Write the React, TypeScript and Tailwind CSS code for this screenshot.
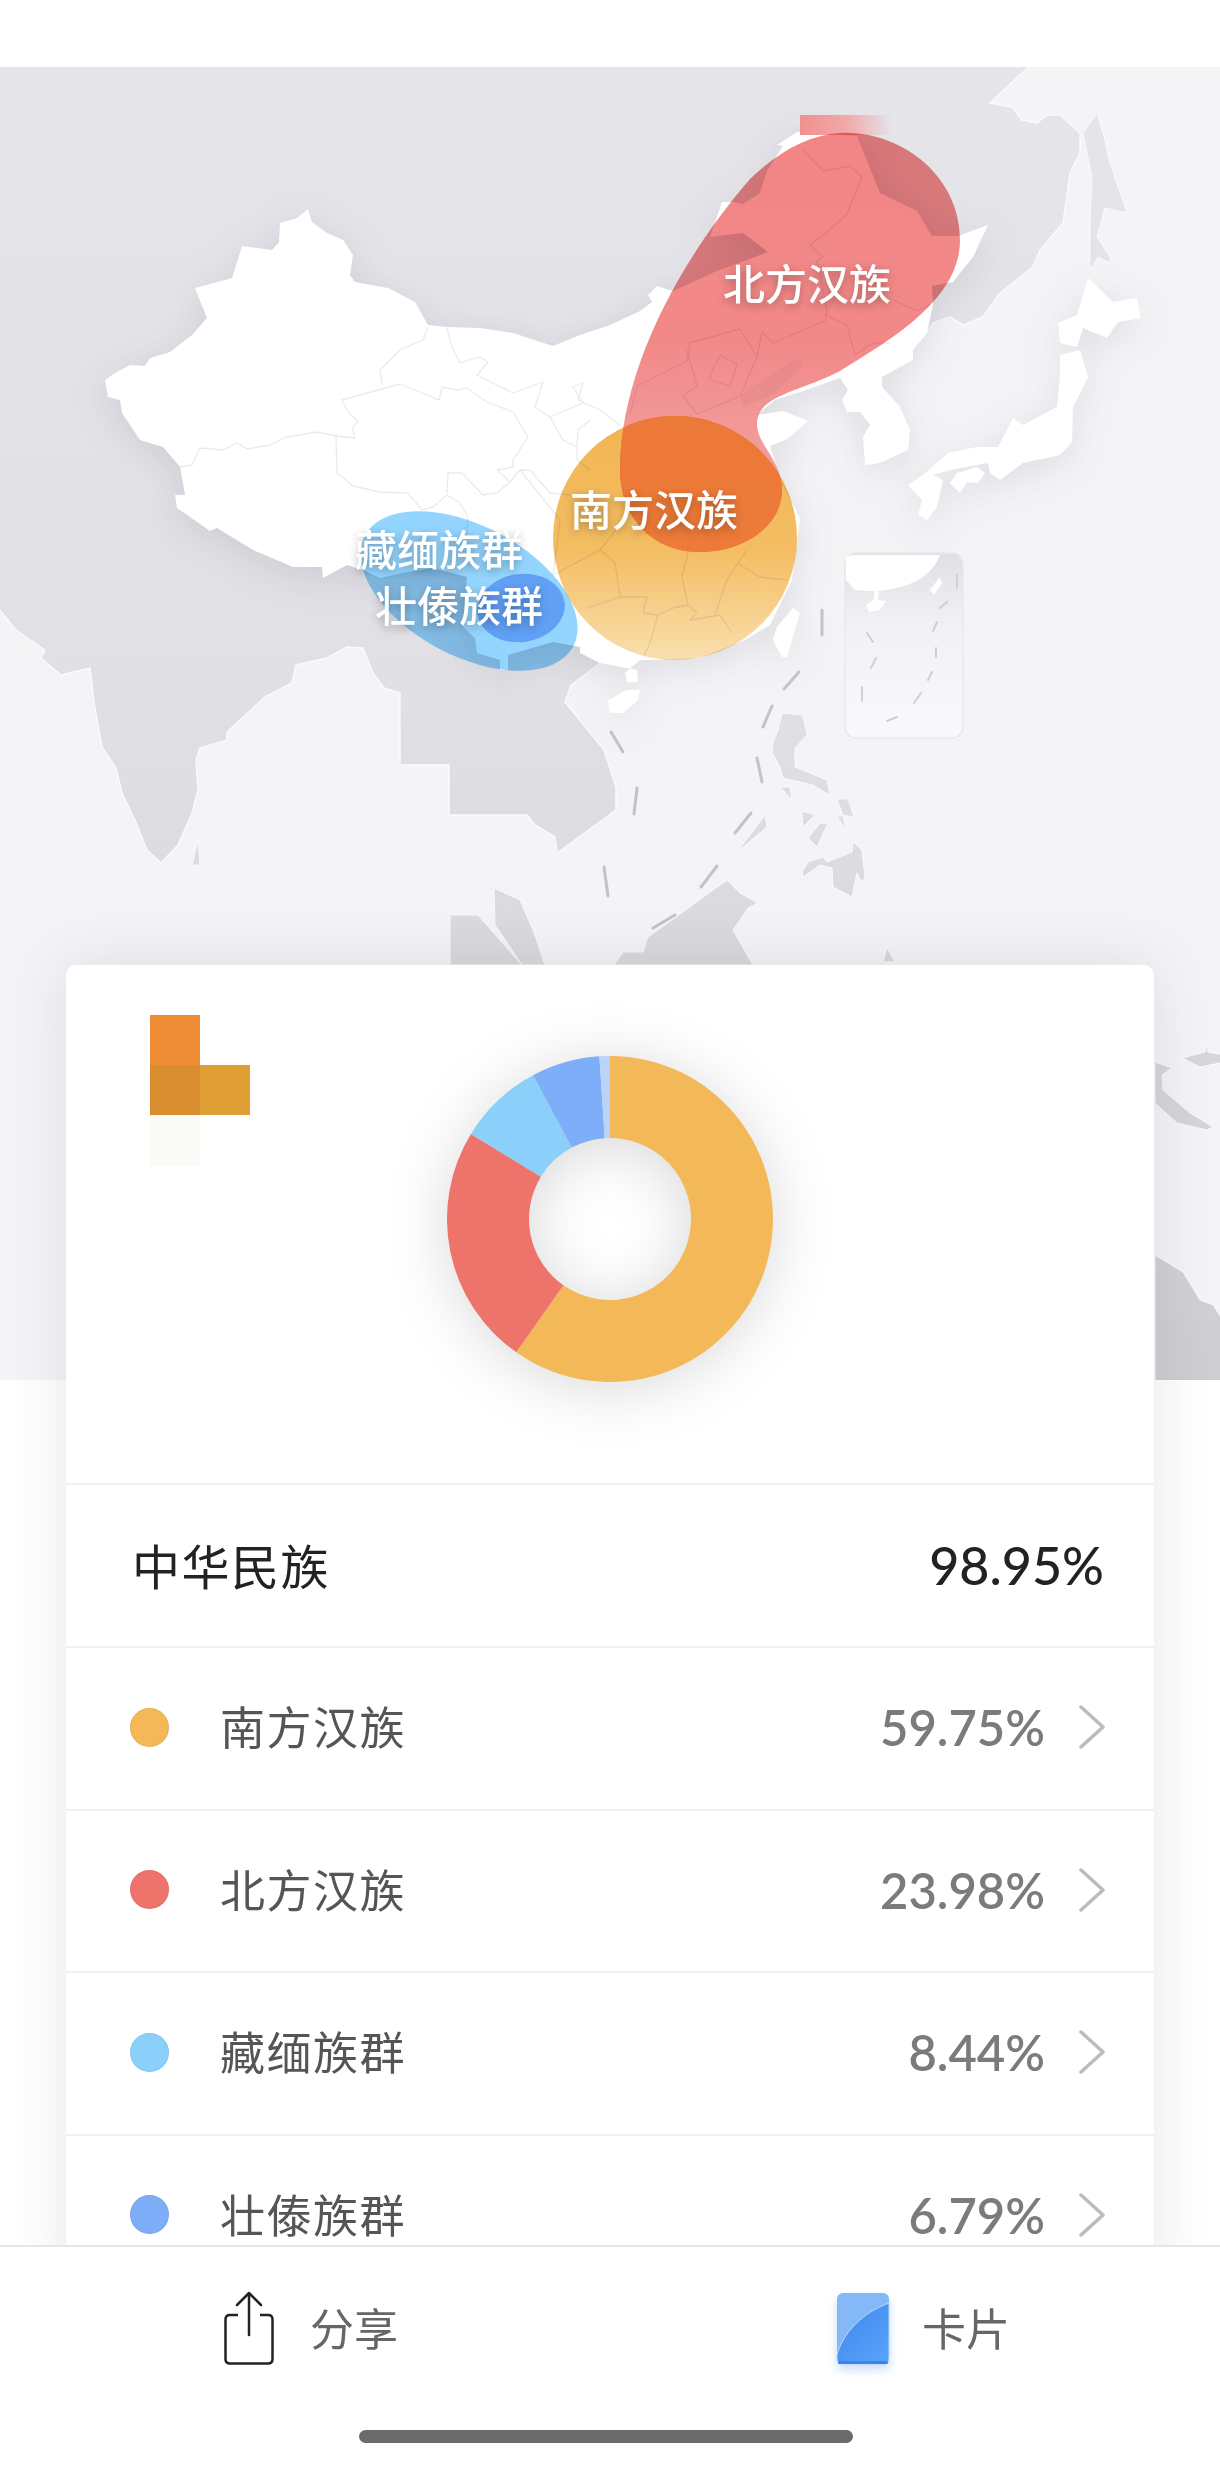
const cjk = "font-['Noto_Sans_CJK_SC',sans-serif]";
const latin = "font-['Lato','Noto_Sans_CJK_SC',sans-serif]";

const landPts =
  "-5,60 1036,60 990,103 1012,107 1022,120 1037,123 1047,115 1060,115 1080,133 1080,153 1070,173 1063,223 1040,250 1033,267 1000,293 983,317 963,325 950,317 933,323 927,333 840,360 740,400 700,600 600,663 571,685 565,702 604,750 616,787 616,810 557,853 555,837 535,825 527,815 449,815 449,765 400,765 400,693 384,688 373,673 363,648 347,647 327,658 296,665 292,683 265,697 227,732 227,740 200,748 196,760 198,790 192,813 178,845 161,863 147,850 135,820 122,793 116,768 102,747 94,703 90,668 61,675 41,658 45,650 16,630 -5,604";

const chinaPts =
  "105,380 115,373 130,365 145,366 150,358 170,352 192,335 207,318 195,288 232,278 242,246 272,250 279,242 280,223 297,218 308,209 312,222 327,233 343,240 353,255 350,275 355,282 388,288 415,302 428,325 447,327 480,328 513,333 553,346 580,335 610,325 640,311 652,302 648,295 657,286 673,291 717,271 768,252 743,233 710,237 722,202 733,202 743,204 760,193 767,171 783,146 777,145 797,132 857,136 880,193 917,211 932,236 958,236 988,225 973,257 953,282 932,286 933,304 927,333 913,350 913,360 882,377 882,387 900,407 910,430 908,450 880,463 865,465 863,437 870,425 860,412 847,412 842,400 848,390 840,378 800,392 775,400 757,415 783,411 808,421 787,439 770,446 783,486 800,518 797,543 792,580 770,625 745,640 700,658 650,660 640,660 625,673 627,682 638,682 637,670 600,663 580,653 580,647 553,642 508,655 508,670 500,670 500,660 477,653 475,638 463,627 467,577 433,568 407,572 380,578 363,570 347,565 323,578 322,567 293,567 253,550 217,528 210,531 177,508 175,495 185,495 180,467 163,447 140,440 122,413 120,400 108,397";

const whiteIslands = [
  "1088,278 1113,302 1137,298 1141,318 1118,322 1107,338 1083,328 1077,347 1060,343 1058,323 1077,315",
  "1060,355 1080,350 1088,377 1073,407 1072,442 1060,455 1023,463 1000,480 990,473 988,463 950,470 933,475 943,480 937,507 927,520 918,515 922,500 908,485 923,475 948,453 977,447 998,447 1013,418 1023,425 1057,407 1060,377",
  "950,483 957,473 977,467 985,473 978,483 967,482 960,493",
  "793,608 800,613 787,657 782,657 773,640 777,627",
  "608,700 627,690 640,690 638,700 623,713 610,713",
];

const grayIslands = [
  "1097,113 1105,140 1109,160 1127,213 1105,208 1097,237 1110,257 1110,263 1098,257 1090,270 1090,223 1092,177 1083,133",
  "782,713 803,715 807,735 795,748 795,767 810,773 827,780 830,795 813,785 800,782 783,778 780,767 772,753 773,742 778,730",
  "853,842 862,850 865,877 862,883 857,873 852,897 833,887 832,868 820,865 803,877 802,872 808,862 823,857 827,862 852,852",
  "780,787 790,787 792,800",
  "802,811 815,815 803,827",
  "808,838 820,823 828,823 817,847",
  "837,799 848,799 854,817 843,815",
  "837,816 843,816 846,830",
  "765,815 767,827 737,852",
  "615,963 623,952 643,952 648,937 727,880 740,893 758,903 748,908 733,930 753,965 615,965",
  "450,915 478,915 522,965 450,965",
  "494,888 520,900 533,930 545,965 522,965 495,925",
  "883,962 887,947 895,962",
  "198,840 200,865 192,865",
  "1155,1062 1172,1068 1162,1075 1163,1090 1190,1113 1213,1127 1207,1130 1177,1123 1155,1103",
  "1182,1058 1205,1052 1206,1044 1208,1052 1225,1055 1225,1062 1200,1067",
  "1155,1255 1183,1272 1200,1300 1213,1305 1225,1323 1225,1385 1155,1385",
];

const provinceLines = [
  "180,467 192,465 200,448 223,450 237,443 247,449 270,445 287,437 317,432 337,436 355,438 352,428 358,422 347,410 342,400 400,384 439,400 442,387 457,390 467,388 487,402 513,412 528,437 513,460 513,467 497,470 510,482 520,470 530,470 550,493 570,495",
  "382,385 380,370 400,350 423,340 428,327",
  "447,328 452,347 460,363 480,357 488,362 477,375 513,393 543,382 535,407 550,417 583,403 573,387 583,383 578,400 600,410 620,425",
  "336,436 337,473 353,486 380,492 408,493 422,510 433,507 447,495 460,503 468,517 466,540",
  "447,493 448,473 462,473 483,495 497,493 510,482",
  "550,417 563,440 577,447 578,430 590,420",
  "577,447 577,460 590,470",
  "803,150 823,171 850,166 862,177 847,214 833,227 810,245 823,257 817,261 827,311 825,321 773,343 762,332 757,357 740,329 690,343 687,361 637,386 630,414",
  "823,314 847,325 855,355 873,343 890,343",
  "893,300 917,311 930,305",
  "687,350 697,386 683,396 697,414 740,396 757,357",
  "710,375 720,355 737,364 730,386 710,380 710,375",
  "600,550 615,563 620,597 587,608",
  "620,597 647,597 643,613 658,615 650,643 643,658",
  "687,557 682,577 688,605 673,608 658,615",
  "688,605 697,613 690,620 720,615 732,633",
  "747,550 727,580 715,615",
  "737,563 760,577 787,580",
  "637,439 633,457 680,443 710,432 753,461 707,471 633,457",
  "707,471 713,510 690,530 687,557",
  "633,457 640,500 600,550",
  "520,470 560,520 553,575 600,550",
];

const nineDash = [
  [822, 610, 822, 635],
  [799, 672, 784, 689],
  [772, 706, 763, 727],
  [757, 758, 762, 782],
  [751, 813, 735, 833],
  [717, 866, 701, 887],
  [675, 915, 653, 928],
  [604, 867, 608, 896],
  [637, 788, 634, 814],
  [611, 732, 623, 752],
];

const insetDash = [
  [957, 575, 957, 588],
  [947, 602, 940, 608],
  [937, 622, 933, 631],
  [936, 648, 936, 657],
  [932, 672, 928, 680],
  [921, 693, 914, 703],
  [897, 717, 887, 721],
  [862, 687, 862, 701],
  [876, 658, 871, 668],
  [867, 633, 873, 642],
];

const RED_SHAPE =
  "M840 133 C900 130 960 175 960 240 C960 300 890 340 840 371 C800 392 757 395 757 424 C757 445 782 460 782 490 C782 525 745 552 700 552 C650 552 620 515 620 470 C620 370 680 260 750 179 C780 150 810 135 840 133 Z";

function ChinaMap() {
  return (
    <svg viewBox="0 67 1220 1313" className="block w-[1220px] h-[1313px]">
      <defs>
        <linearGradient id="land" gradientUnits="userSpaceOnUse" x1="0" y1="67" x2="0" y2="1380">
          <stop offset="0" stopColor="#e5e5ea" />
          <stop offset="0.5" stopColor="#dfdfe4" />
          <stop offset="1" stopColor="#cdcdd2" />
        </linearGradient>
        <linearGradient id="red" gradientUnits="userSpaceOnUse" x1="0" y1="133" x2="0" y2="480">
          <stop offset="0" stopColor="#f28585" />
          <stop offset="0.6" stopColor="#f28989" />
          <stop offset="1" stopColor="#f2a0a0" />
        </linearGradient>
        <linearGradient id="yellow" gradientUnits="userSpaceOnUse" x1="0" y1="416" x2="0" y2="659">
          <stop offset="0" stopColor="#f2b553" />
          <stop offset="0.55" stopColor="#f4bd62" />
          <stop offset="1" stopColor="#f9dfae" />
        </linearGradient>
        <linearGradient id="patch" x1="0" y1="0" x2="1" y2="0">
          <stop offset="0" stopColor="#f09090" />
          <stop offset="0.5" stopColor="#f2a8a8" />
          <stop offset="1" stopColor="#f2a8a8" stopOpacity="0" />
        </linearGradient>
        <linearGradient id="inset" x1="0" y1="0" x2="0" y2="1">
          <stop offset="0" stopColor="#dfdfe4" />
          <stop offset="0.4" stopColor="#f2f2f5" />
          <stop offset="1" stopColor="#f9f9fb" />
        </linearGradient>
        <clipPath id="yellowClip">
          <circle cx="675" cy="538" r="122" />
        </clipPath>
      </defs>

      <rect x="0" y="67" width="1220" height="1313" fill="#f4f4f7" />
      <polygon points={landPts} fill="url(#land)" stroke="#fafafc" strokeWidth="1.5" strokeLinejoin="round" />
      {grayIslands.map((p) => (
        <polygon key={p} points={p} fill="url(#land)" stroke="#fafafc" strokeWidth="1" />
      ))}

      <g className="drop-shadow-[0_8px_18px_rgba(70,70,85,0.13)]">
        <polygon points={chinaPts} fill="#ffffff" />
        {whiteIslands.map((p) => (
          <polygon key={p} points={p} fill="#ffffff" />
        ))}
      </g>
      <polygon points="740,395 770,375 797,358 803,366 773,395 743,407" fill="#f6f6f8" />
      {provinceLines.map((p) => (
        <polyline key={p} points={p} fill="none" stroke="#ebebef" strokeWidth="1.3" strokeLinejoin="round" />
      ))}

      {/* taiwan strait inset */}
      <rect x="845" y="553" width="118" height="185" rx="11" fill="url(#inset)" stroke="#e9e9ed" strokeWidth="1.5" />
      <path d="M846 558 Q846 555 856 555 L940 555 Q930 580 900 587 Q880 593 855 590 L846 580 Z" fill="#ffffff" />
      <polygon points="874,592 879,590 878,600 886,601 880,610 869,612 866,605 874,600" fill="#ffffff" />
      <polygon points="930,590 940,577 942,583 934,595" fill="#ffffff" />
      {insetDash.map(([x1, y1, x2, y2]) => (
        <line key={x1 + "-" + y1} x1={x1} y1={y1} x2={x2} y2={y2} stroke="#cfcfd4" strokeWidth="2" strokeLinecap="round" />
      ))}
      {nineDash.map(([x1, y1, x2, y2]) => (
        <line key={x1 + "-" + y1} x1={x1} y1={y1} x2={x2} y2={y2} stroke="#c2c2c8" strokeWidth="3" strokeLinecap="round" />
      ))}

      {/* region blobs */}
      <ellipse cx="469" cy="591" rx="118" ry="65" transform="rotate(28 469 591)" fill="#94d5ff" className="mix-blend-multiply" />
      <ellipse cx="521" cy="608" rx="44" ry="34" transform="rotate(-8 521 608)" fill="#5b9bf4" opacity="0.92" />
      <rect x="800" y="115" width="92" height="20" fill="url(#patch)" />
      <path d={RED_SHAPE} fill="url(#red)" className="mix-blend-multiply" />
      <circle cx="675" cy="538" r="122" fill="url(#yellow)" className="mix-blend-multiply" />
      <path d={RED_SHAPE} fill="#ec7a38" opacity="0.96" clipPath="url(#yellowClip)" />
    </svg>
  );
}

const slices = [
  { value: 59.75, color: "#f3b858" },
  { value: 23.98, color: "#ee736b" },
  { value: 8.44, color: "#8ad0fb" },
  { value: 6.79, color: "#7eaef8" },
  { value: 1.04, color: "#b9d4f7" },
];

function Donut() {
  const cx = 163;
  const cy = 163;
  const R = 163;
  const r = 81;
  let start = 0;
  const pt = (rad: number, frac: number) => {
    const a = frac * 2 * Math.PI;
    return `${(cx + rad * Math.sin(a)).toFixed(2)} ${(cy - rad * Math.cos(a)).toFixed(2)}`;
  };
  return (
    <svg width="326" height="326" viewBox="0 0 326 326" className="block overflow-visible drop-shadow-[0_6px_30px_rgba(0,0,0,0.15)]">
      {slices.map((s) => {
        const a = start;
        const b = start + s.value / 100;
        start = b;
        const big = b - a > 0.5 ? 1 : 0;
        return (
          <path
            key={s.color}
            fill={s.color}
            d={`M${pt(R, a)} A${R} ${R} 0 ${big} 1 ${pt(R, b)} L${pt(r, b)} A${r} ${r} 0 ${big} 0 ${pt(r, a)} Z`}
          />
        );
      })}
    </svg>
  );
}

const rows = [
  { name: "南方汉族", pct: "59.75%", dot: "bg-[#f3b858]" },
  { name: "北方汉族", pct: "23.98%", dot: "bg-[#ee736b]" },
  { name: "藏缅族群", pct: "8.44%", dot: "bg-[#8ad0fb]" },
  { name: "壮傣族群", pct: "6.79%", dot: "bg-[#7eaef8]" },
];

function MapLabel({ text, className }: { text: string; className: string }) {
  return (
    <div
      className={`absolute text-[42px] leading-[50px] font-medium text-white whitespace-nowrap [text-shadow:0_3px_8px_rgba(0,0,0,0.3)] ${className}`}
    >
      {text}
    </div>
  );
}

export default function App() {
  return (
    <div className={`w-[1220px] h-[2465px] bg-white overflow-hidden ${cjk}`}>
      <div className="h-[2245px] overflow-hidden">
        <div className="h-[67px]" />
        <div className="relative">
          <ChinaMap />
          <MapLabel text="北方汉族" className="left-[723px] top-[190px]" />
          <MapLabel text="南方汉族" className="left-[570px] top-[416px]" />
          <MapLabel text="藏缅族群" className="left-[355px] top-[456px]" />
          <MapLabel text="壮傣族群" className="left-[375px] top-[512px]" />
        </div>

        <div className="relative mx-[66px] -mt-[415px] bg-white rounded-t-[10px] shadow-[0_0_60px_rgba(60,60,80,0.12)]">
          <div className="relative h-[520px] flex justify-center pt-[91px] border-b-2 border-[#f0f0f2]">
            <div className="absolute left-[84px] top-[50px] grid grid-cols-[50px_50px] grid-rows-[50px_50px_50px]">
              <div className="bg-[#ef8c36]" />
              <div />
              <div className="bg-[#d98f30]" />
              <div className="bg-[#e09f35]" />
              <div className="bg-[#fafbf6]" />
            </div>
            <Donut />
          </div>

          <div className="h-[163px] flex items-center justify-between pl-[66px] pr-[50px] border-b-2 border-[#f0f0f2]">
            <span className="mb-[4px] text-[48px] leading-[56px] tracking-[1.5px] text-[#222222]">中华民族</span>
            <span className={`mb-[2px] text-[52px] leading-[60px] font-medium text-[#222222] ${latin}`}>98.95%</span>
          </div>

          {rows.map((row) => (
            <div key={row.name} className="h-[162.5px] flex items-center pl-[64px] pr-[49px] pb-[2px] border-b-2 border-[#f0f0f2]">
              <div className={`w-[39px] h-[39px] rounded-full border border-black/5 ${row.dot}`} />
              <span className="ml-[51px] mb-[2px] text-[45px] leading-[52px] tracking-[1.5px] text-[#555555]">{row.name}</span>
              <span className={`ml-auto text-[49px] leading-[56px] font-semibold text-[#7b7b7b] ${latin}`}>{row.pct}</span>
              <svg width="26" height="44" viewBox="0 0 26 44" fill="none" className="ml-[34px]">
                <path d="M2 2 L24 22 L2 42" stroke="#bcbcbc" strokeWidth="3.5" strokeLinecap="round" strokeLinejoin="round" />
              </svg>
            </div>
          ))}
        </div>
      </div>

      {/* bottom bar */}
      <div className="h-[220px] border-t-2 border-[#e6e6e6] bg-white relative">
        <div className="flex items-center h-[162px]">
          <div className="flex items-center ml-[224px] w-[480px]">
            <svg width="50" height="74" viewBox="0 0 50 74" fill="none">
              <path
                d="M14 24 L6 24 Q1.5 24 1.5 28.5 L1.5 68 Q1.5 72.5 6 72.5 L44 72.5 Q48.5 72.5 48.5 68 L48.5 28.5 Q48.5 24 44 24 L36 24"
                stroke="#222222"
                strokeWidth="2.5"
              />
              <path d="M25 44 L25 2 M13 14 L25 2 L37 14" stroke="#222222" strokeWidth="2.5" strokeLinecap="round" strokeLinejoin="round" />
            </svg>
            <span className="ml-[36px] mb-[2px] text-[44px] leading-[52px] text-[#666666]">分享</span>
          </div>
          <div className="flex items-center ml-[133px]">
            <svg width="52" height="71" viewBox="0 0 52 71" className="overflow-visible drop-shadow-[0_5px_5px_rgba(74,143,240,0.3)]">
              <defs>
                <linearGradient id="cardFill" x1="0" y1="0" x2="1" y2="1">
                  <stop offset="0" stopColor="#3f86ee" />
                  <stop offset="1" stopColor="#5aa5fb" />
                </linearGradient>
              </defs>
              <rect x="0" y="0" width="52" height="71" rx="6" fill="#84b8f6" />
              <path d="M52 10 C25 20 6 40 0 62 L0 65 Q0 71 6 71 L46 71 Q52 71 52 65 Z" fill="url(#cardFill)" stroke="#b8d6fa" strokeWidth="1" />
              <rect x="1" y="68" width="50" height="3" rx="1.5" fill="#3f83e6" />
            </svg>
            <span className="ml-[33px] mb-[2px] text-[44px] leading-[52px] text-[#666666]">卡片</span>
          </div>
        </div>
        <div className="w-[494px] h-[13px] ml-[359px] mt-[21px] rounded-full bg-[#6b6b6b]" />
      </div>
    </div>
  );
}
